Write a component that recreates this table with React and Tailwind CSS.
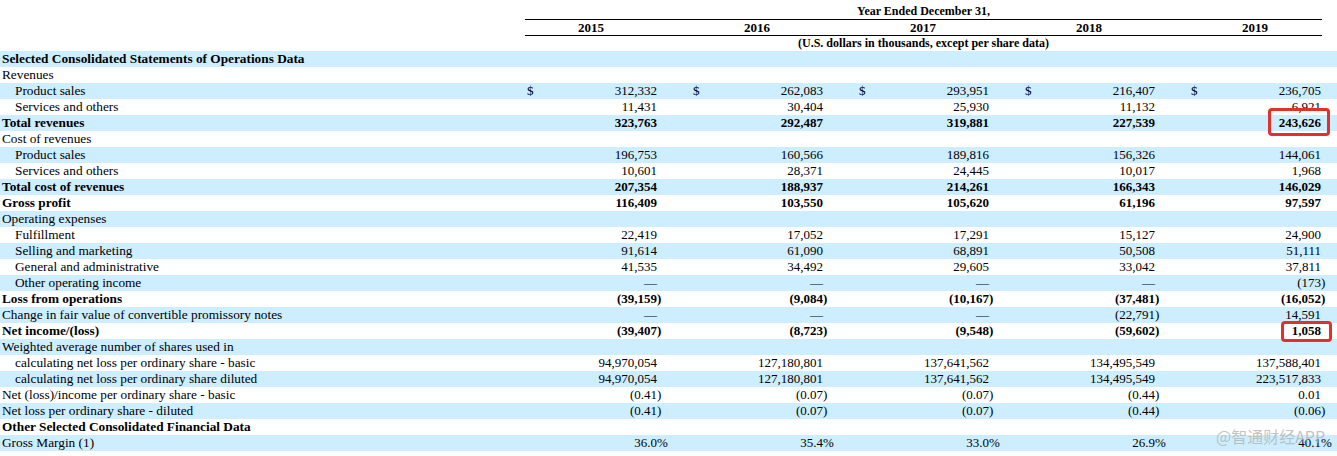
const years = ['2015', '2016', '2017', '2018', '2019'];

// label, indent, bold, values (dollar sign shown when "$" flag true)
const rows = [
  { label: 'Selected Consolidated Statements of Operations Data', bold: true },
  { label: 'Revenues' },
  { label: 'Product sales', indent: true, dollar: true, values: ['312,332', '262,083', '293,951', '216,407', '236,705'] },
  { label: 'Services and others', indent: true, values: ['11,431', '30,404', '25,930', '11,132', '6,921'] },
  { label: 'Total revenues', bold: true, values: ['323,763', '292,487', '319,881', '227,539', '243,626'] },
  { label: 'Cost of revenues' },
  { label: 'Product sales', indent: true, values: ['196,753', '160,566', '189,816', '156,326', '144,061'] },
  { label: 'Services and others', indent: true, values: ['10,601', '28,371', '24,445', '10,017', '1,968'] },
  { label: 'Total cost of revenues', bold: true, values: ['207,354', '188,937', '214,261', '166,343', '146,029'] },
  { label: 'Gross profit', bold: true, values: ['116,409', '103,550', '105,620', '61,196', '97,597'] },
  { label: 'Operating expenses' },
  { label: 'Fulfillment', indent: true, values: ['22,419', '17,052', '17,291', '15,127', '24,900'] },
  { label: 'Selling and marketing', indent: true, values: ['91,614', '61,090', '68,891', '50,508', '51,111'] },
  { label: 'General and administrative', indent: true, values: ['41,535', '34,492', '29,605', '33,042', '37,811'] },
  { label: 'Other operating income', indent: true, values: ['—', '—', '—', '—', '(173)'] },
  { label: 'Loss from operations', bold: true, values: ['(39,159)', '(9,084)', '(10,167)', '(37,481)', '(16,052)'] },
  { label: 'Change in fair value of convertible promissory notes', values: ['—', '—', '—', '(22,791)', '14,591'] },
  { label: 'Net income/(loss)', bold: true, values: ['(39,407)', '(8,723)', '(9,548)', '(59,602)', '1,058'] },
  { label: 'Weighted average number of shares used in' },
  { label: 'calculating net loss per ordinary share - basic', indent: true, values: ['94,970,054', '127,180,801', '137,641,562', '134,495,549', '137,588,401'] },
  { label: 'calculating net loss per ordinary share diluted', indent: true, values: ['94,970,054', '127,180,801', '137,641,562', '134,495,549', '223,517,833'] },
  { label: 'Net (loss)/income per ordinary share - basic', values: ['(0.41)', '(0.07)', '(0.07)', '(0.44)', '0.01'] },
  { label: 'Net loss per ordinary share - diluted', values: ['(0.41)', '(0.07)', '(0.07)', '(0.44)', '(0.06)'] },
  { label: 'Other Selected Consolidated Financial Data', bold: true },
  { label: 'Gross Margin (1)', values: ['36.0%', '35.4%', '33.0%', '26.9%', '40.1%'] },
];

function Cell({ value, dollar }) {
  let num = value;
  let suffix = '';
  if (value.endsWith(')') || value.endsWith('%')) {
    num = value.slice(0, -1);
    suffix = value.slice(-1);
  }
  return (
    <div className="w-[166px] shrink-0 flex">
      <div className="w-[132px] flex justify-between">
        <span className="pl-[2px]">{dollar ? '$' : ''}</span>
        <span>{num}</span>
      </div>
      <span className="w-[12px]">{suffix}</span>
    </div>
  );
}

function Row({ row, blue }) {
  return (
    <div className={`flex h-4 leading-4 whitespace-nowrap ${blue ? 'bg-[#cceeff]' : ''} ${row.bold ? 'font-bold' : ''}`}>
      <div className={`w-[525px] shrink-0 text-[13.3px] ${row.indent ? 'pl-[15px]' : 'pl-[2px]'}`}>{row.label}</div>
      {row.values && row.values.map((v, i) => <Cell key={i} value={v} dollar={row.dollar} />)}
    </div>
  );
}

export default function App() {
  return (
    <div className="relative w-[1337px] h-[456px] overflow-hidden bg-white text-black text-[13px] font-['Liberation_Serif',serif]">
      <div className="h-[3px]" />
      <div className="flex font-bold">
        <div className="w-[525px] shrink-0" />
        <div className="w-[797px] h-[17px] leading-4 text-center text-[12px] border-b border-black">Year Ended December 31,</div>
      </div>
      <div className="flex font-bold">
        <div className="w-[525px] shrink-0" />
        <div className="w-[797px] h-[16px] leading-[15px] flex border-b border-black">
          {years.map((y, i) => (
            <div key={y} className={`${i < 4 ? 'w-[166px]' : 'w-[132px]'} shrink-0`}>
              <div className="w-[132px] text-center">{y}</div>
            </div>
          ))}
        </div>
      </div>
      <div className="flex font-bold">
        <div className="w-[525px] shrink-0" />
        <div className="w-[797px] h-[15px] leading-[15px] text-center text-[12px]">(U.S. dollars in thousands, except per share data)</div>
      </div>

      {rows.map((r, i) => (
        <Row key={i} row={r} blue={i % 2 === 0} />
      ))}

      {/* highlight boxes */}
      <div className="absolute left-[1268px] top-[108px] w-[62px] h-[28px] border-[3px] border-[#e3302b] rounded-[4px]" />
      <div className="absolute left-[1281px] top-[321px] w-[51px] h-[21px] border-[3px] border-[#e3302b] rounded-[4px]" />

      {/* watermark */}
      <div className="absolute left-[1216px] top-[426px] text-[16px] leading-5 text-[#b4b4b4]/80 font-['Noto_Sans_CJK_SC',sans-serif]">
        @智通财经APP
      </div>
    </div>
  );
}
